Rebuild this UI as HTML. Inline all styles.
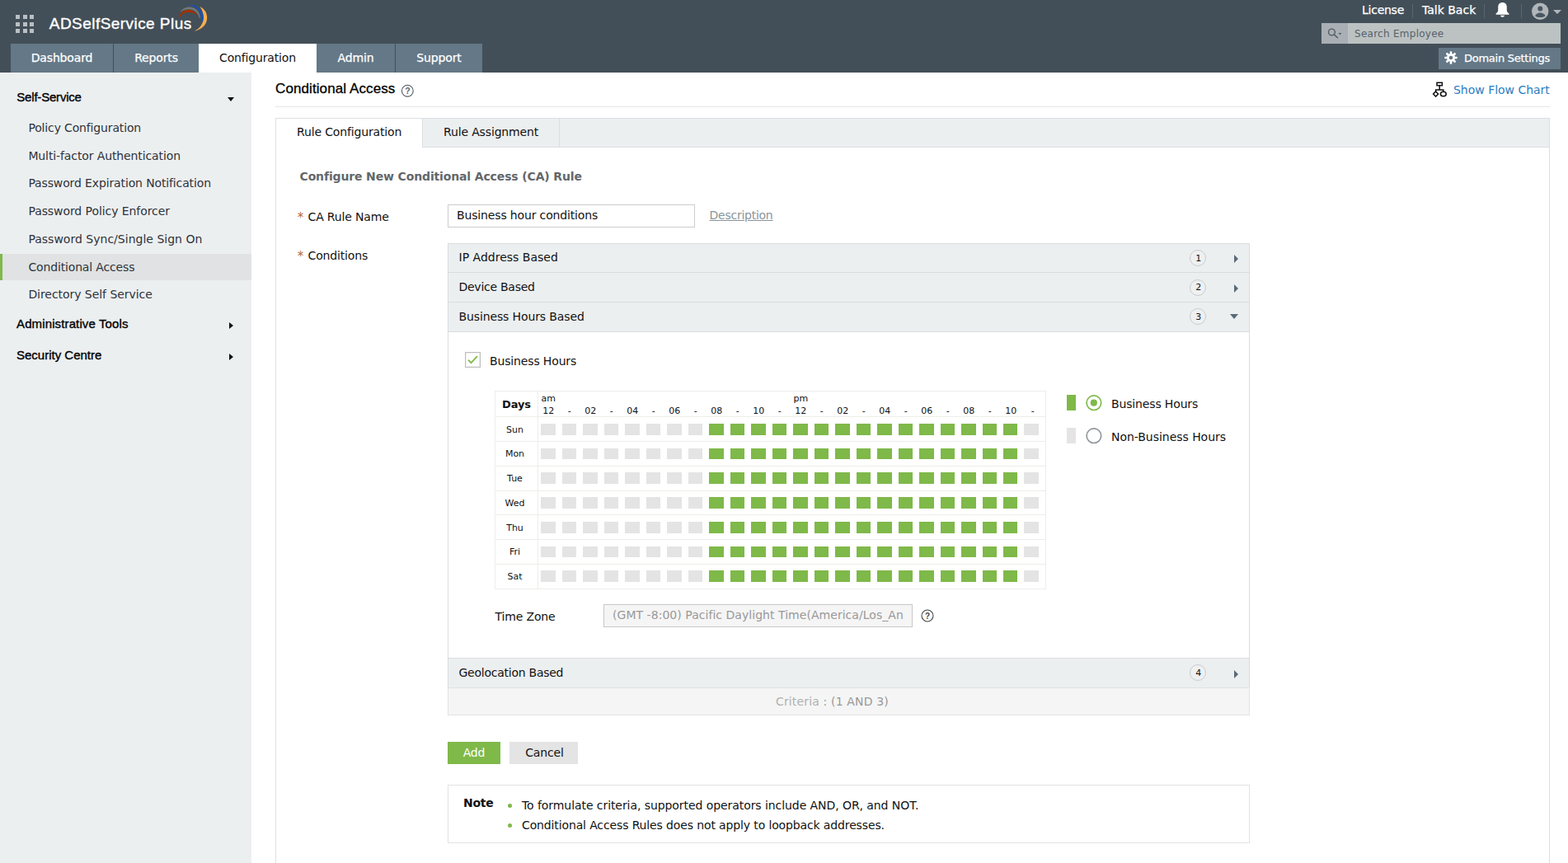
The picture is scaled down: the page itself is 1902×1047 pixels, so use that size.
<!DOCTYPE html>
<html lang="en">
<head>
<meta charset="utf-8">
<title>ADSelfService Plus - Conditional Access</title>
<style>
*{box-sizing:border-box;margin:0;padding:0}
html,body{width:1902px;height:1047px;overflow:hidden;background:#fff}
body{position:relative;font-family:"DejaVu Sans","Liberation Sans",sans-serif;font-size:14px;color:#111;letter-spacing:-0.15px}
.a{position:absolute;white-space:nowrap}
.t{position:absolute;white-space:nowrap;height:20px;line-height:20px}
.lato{font-family:"Liberation Sans",sans-serif;letter-spacing:0}
#hdr{left:0;top:0;width:1902px;height:88px;background:#434f58}
.tab{top:53px;height:35px;line-height:35px;text-align:center;color:#fff;background:#647887;-webkit-text-stroke:0.25px #fff}
.tab.on{background:#fff;color:#111;-webkit-text-stroke:0}
#side{left:0;top:88px;width:305px;height:959px;background:#eceff0}
.sh{left:20px;font-family:"Liberation Sans",sans-serif;font-size:15px;letter-spacing:0;color:#000;-webkit-text-stroke:0.35px #000}
.si{left:34.4px;color:#2e323a}
.tri-r{position:absolute;width:0;height:0;border-left:5.5px solid #596a77;border-top:5px solid transparent;border-bottom:5px solid transparent}
.tri-d{position:absolute;width:0;height:0;border-top:6px solid #596a77;border-left:5px solid transparent;border-right:5px solid transparent}
.req{color:#b06a3a}
.hl{font-size:11px;letter-spacing:0;height:14px;line-height:14px;position:absolute;text-align:center;white-space:nowrap}
</style>
</head>
<body>

<div id="hdr" class="a">
<div class="a" style="left:19.0px;top:18.0px;width:5px;height:5px;background:#b9bfc3"></div>
<div class="a" style="left:27.5px;top:18.0px;width:5px;height:5px;background:#b9bfc3"></div>
<div class="a" style="left:36.0px;top:18.0px;width:5px;height:5px;background:#b9bfc3"></div>
<div class="a" style="left:19.0px;top:26.5px;width:5px;height:5px;background:#b9bfc3"></div>
<div class="a" style="left:27.5px;top:26.5px;width:5px;height:5px;background:#b9bfc3"></div>
<div class="a" style="left:36.0px;top:26.5px;width:5px;height:5px;background:#b9bfc3"></div>
<div class="a" style="left:19.0px;top:35.0px;width:5px;height:5px;background:#b9bfc3"></div>
<div class="a" style="left:27.5px;top:35.0px;width:5px;height:5px;background:#b9bfc3"></div>
<div class="a" style="left:36.0px;top:35.0px;width:5px;height:5px;background:#b9bfc3"></div>
<div class="a lato" style="left:59.800px;top:15.600px;height:26px;line-height:26px;font-size:19px;color:#fff;letter-spacing:0.450px;-webkit-text-stroke:0.350px #fff">ADSelfService Plus</div>
<svg class="a" style="left:210px;top:0px" width="50" height="44" viewBox="210 0 50 44">
<path d="M242.400 8 C248.500 11 251.200 16 251.200 21.500 C251.200 29.500 245 36 235.600 37.800 L238.300 36.300 C243.500 33 246.900 27.500 246.900 21 C246.900 16.500 245.500 12.500 242.400 8 Z" fill="#fbae4e"/>
<path d="M229 5.9 L235 5.9 C241 8 246.5 14 246.8 21 C246.8 24 246 26.5 245 27.8 L243.8 27.5 C244.5 22 243.5 16 240 11.5 C237.5 8.5 234 7 229 6.8 Z" fill="#1a52b5"/>
<path d="M218.8 13.8 C222 10 226 8.6 230 8.6 C237 8.8 242.5 14 243 21.8 L241.8 21.8 C240.5 16 236 11.5 229.5 11.3 C225.5 11.3 222 12 219.2 14.2 Z" fill="#73787b"/>
<path d="M216.8 22 C218 15 224 11.8 229 11.8 C233.5 11.8 237.5 15 239.8 18.8 C236.5 16 233 15 229 15 C223.5 15 219.5 17.5 217.6 22.3 Z" fill="#a33200"/>
</svg>
<div class="a tab" style="left:13px;width:124px">Dashboard</div>
<div class="a tab" style="left:138px;width:103px">Reports</div>
<div class="a tab on" style="left:241px;width:143px">Configuration</div>
<div class="a tab" style="left:384px;width:95px">Admin</div>
<div class="a tab" style="left:480px;width:105px">Support</div>
<div class="t" style="left:1652px;top:2px;color:#fff;letter-spacing:-0.25px;-webkit-text-stroke:0.25px #fff">License</div>
<div class="t" style="left:1725px;top:2px;color:#fff;letter-spacing:0px;-webkit-text-stroke:0.25px #fff">Talk Back</div>
<div class="a" style="left:1713px;top:5px;width:1px;height:17px;background:#5a666f"></div>
<div class="a" style="left:1800px;top:5px;width:1px;height:17px;background:#5a666f"></div>
<div class="a" style="left:1845px;top:5px;width:1px;height:17px;background:#5a666f"></div>
<svg class="a" style="left:1814.400px;top:2px" width="17" height="19" viewBox="0 0 18 21" preserveAspectRatio="none"><path d="M9 1.2c-3.4 0-5.6 2.4-5.6 5.8v4.6c0 1.6-1.2 3.2-2.8 4.4v1.4h16.8v-1.4c-1.6-1.200-2.8-2.800-2.8-4.400V7c0-3.400-2.200-5.800-5.600-5.800z" fill="#fff"/><path d="M6.400 18.600h5.200c0 1.300-1.100 2.100-2.600 2.100s-2.600-0.800-2.600-2.100z" fill="#fff"/></svg>
<svg class="a" style="left:1857px;top:3px" width="22" height="22" viewBox="0 0 22 22"><circle cx="11.200" cy="10.800" r="10.200" fill="#b0b6ba"/><circle cx="11.300" cy="7.400" r="3" fill="#4a5660"/><path d="M5 16.200c1.400-2.600 3.600-3.800 6.300-3.800s4.900 1.200 6.300 3.800c-1.600 1.200-3.800 1.900-6.300 1.900s-4.700-0.700-6.300-1.900z" fill="#4a5660"/></svg>
<div class="a" style="left:1884px;top:12px;width:0;height:0;border-top:5.500px solid #b0b6ba;border-left:5px solid transparent;border-right:5px solid transparent"></div>
<div class="a" style="left:1603px;top:28px;width:290px;height:25px;background:#bcc2c2"></div>
<div class="a" style="left:1603px;top:28px;width:32px;height:25px;background:#a9afb5"></div>
<svg class="a" style="left:1608px;top:31px" width="22" height="18" viewBox="1608 31 22 18"><circle cx="1615.400" cy="39" r="3.900" fill="none" stroke="#4f5b63" stroke-width="1.400"/><path d="M1618.300 42l4.200 3.800" stroke="#4f5b63" stroke-width="1.500" stroke-linecap="round"/><path d="M1623.400 40h4l-2 2.200z" fill="#4f5b63"/></svg>
<div class="t" style="left:1643px;top:31px;font-size:12px;color:#56616a;letter-spacing:0.270px">Search Employee</div>
<div class="a" style="left:1745px;top:58px;width:148px;height:26px;background:#647887"></div>
<svg class="a" style="left:1752px;top:61.800px" width="16" height="16" viewBox="0 0 16 16"><g fill="#fff"><circle cx="8" cy="8" r="5"/><rect x="6.7" y="0.3" width="2.6" height="15.4" rx="0.6"/><rect x="6.7" y="0.3" width="2.6" height="15.4" rx="0.6" transform="rotate(45 8 8)"/><rect x="6.7" y="0.3" width="2.6" height="15.4" rx="0.6" transform="rotate(90 8 8)"/><rect x="6.7" y="0.3" width="2.6" height="15.4" rx="0.6" transform="rotate(135 8 8)"/></g><circle cx="8" cy="8" r="2.3" fill="#647887"/></svg>
<div class="t" style="left:1776px;top:61px;font-size:13px;color:#fff;letter-spacing:-0.26px;-webkit-text-stroke:0.25px #fff">Domain Settings</div>
</div>
<div id="side" class="a"></div>
<div class="a" style="left:0;top:308px;width:305px;height:32px;background:#e0e2e3"></div>
<div class="a" style="left:0;top:308px;width:3px;height:32px;background:#7fb949"></div>
<div class="t sh" style="top:108px;letter-spacing:-0.2px;left:20.3px">Self-Service</div>
<div class="a" style="left:276px;top:118px;width:0;height:0;border-top:5px solid #111;border-left:4.5px solid transparent;border-right:4.5px solid transparent"></div>
<div class="t si" style="top:145px;letter-spacing:-0.15px">Policy Configuration</div>
<div class="t si" style="top:179px;letter-spacing:-0.11px">Multi-factor Authentication</div>
<div class="t si" style="top:212px;letter-spacing:-0.13px">Password Expiration Notification</div>
<div class="t si" style="top:246px;letter-spacing:-0.075px">Password Policy Enforcer</div>
<div class="t si" style="top:280px;letter-spacing:0.01px">Password Sync/Single Sign On</div>
<div class="t si" style="top:314px;letter-spacing:-0.15px">Conditional Access</div>
<div class="t si" style="top:347px;letter-spacing:-0.05px">Directory Self Service</div>
<div class="t sh" style="top:383px;letter-spacing:0.125px">Administrative Tools</div>
<div class="a" style="left:278.400px;top:390.500px;width:0;height:0;border-left:5.500px solid #111;border-top:4.500px solid transparent;border-bottom:4.500px solid transparent"></div>
<div class="t sh" style="top:421px">Security Centre</div>
<div class="a" style="left:278.400px;top:428.500px;width:0;height:0;border-left:5.500px solid #111;border-top:4.500px solid transparent;border-bottom:4.500px solid transparent"></div>
<div class="t lato" style="left:334px;top:96.100px;height:24px;line-height:24px;font-size:17px;color:#000;letter-spacing:0.100px;-webkit-text-stroke:0.300px #000">Conditional Access</div>
<svg class="a" style="left:486px;top:101.500px" width="17" height="17" viewBox="0 0 17 17"><circle cx="8.300" cy="8.200" r="6.900" fill="none" stroke="#4e5a62" stroke-width="1.100"/><text x="8.300" y="12" font-family="Liberation Sans, sans-serif" font-size="10.500" font-weight="bold" text-anchor="middle" fill="#5a656d">?</text></svg>
<svg class="a" style="left:1737px;top:99px" width="19" height="19" viewBox="1737 99 19 19"><g fill="none" stroke="#111" stroke-width="1.500"><rect x="1743" y="100.300" width="6.400" height="3.400"/><path d="M1746.200 103.700V109M1741.600 111V109H1750.800V111"/><path d="M1741.600 110.900L1744.600 114L1741.600 117.100L1738.600 114Z"/><ellipse cx="1750.800" cy="114" rx="3.400" ry="2.800"/></g></svg>
<div class="t" style="left:1763px;top:99px;color:#2b7dc4;letter-spacing:-0.02px">Show Flow Chart</div>
<div class="a" style="left:334px;top:129px;width:1546px;height:1px;background:#e4e6e7"></div>
<div class="a" style="left:334px;top:143px;width:1546px;height:920px;border:1px solid #dcdfe1;background:#fff"></div>
<div class="a" style="left:334px;top:143px;width:1546px;height:36px;border:1px solid #dcdfe1;background:#eceff0"></div>
<div class="a" style="left:335px;top:144px;width:177px;height:36px;background:#fff"></div>
<div class="a" style="left:512px;top:144px;width:1px;height:34px;background:#dcdfe1"></div>
<div class="a" style="left:678px;top:144px;width:1px;height:34px;background:#dcdfe1"></div>
<div class="t" style="left:360px;top:150px">Rule Configuration</div>
<div class="t" style="left:538px;top:150px">Rule Assignment</div>
<div class="t" style="left:363.5px;top:204px;font-weight:bold;color:#63676a;letter-spacing:-0.14px">Configure New Conditional Access (CA) Rule</div>
<div class="t req" style="left:360.800px;top:254px;font-size:15px;letter-spacing:0">*</div>
<div class="t" style="left:373.5px;top:253px">CA Rule Name</div>
<div class="a" style="left:543px;top:248px;width:300px;height:28px;border:1px solid #ccc;background:#fff"></div>
<div class="t" style="left:554px;top:251px">Business hour conditions</div>
<div class="t" style="left:860.5px;top:251px;color:#8a9499;text-decoration:underline;letter-spacing:-0.25px">Description</div>
<div class="t req" style="left:360.800px;top:301px;font-size:15px;letter-spacing:0">*</div>
<div class="t" style="left:373.5px;top:300px">Conditions</div>
<div class="a" style="left:543px;top:295px;width:973px;height:573px;background:#fff;border:1px solid #d9dddf"></div>
<div class="a" style="left:543px;top:295px;width:973px;height:36px;background:#eceff0;border:1px solid #d9dddf"></div>
<div class="t" style="left:556.5px;top:302px;letter-spacing:0.01px">IP Address Based</div>
<div class="a" style="left:1443px;top:303px;width:20px;height:20px;border-radius:50%;border:1px solid #c9cccd;background:#eef0f1;font-size:11px;line-height:19.6px;text-indent:1.4px;text-align:center;letter-spacing:0">1</div>
<div class="tri-r" style="left:1497px;top:308.5px"></div>
<div class="a" style="left:543px;top:330px;width:973px;height:37px;background:#eceff0;border:1px solid #d9dddf"></div>
<div class="t" style="left:556.5px;top:338px;letter-spacing:-0.26px">Device Based</div>
<div class="a" style="left:1443px;top:338.5px;width:20px;height:20px;border-radius:50%;border:1px solid #c9cccd;background:#eef0f1;font-size:11px;line-height:18px;text-indent:1.4px;text-align:center;letter-spacing:0">2</div>
<div class="tri-r" style="left:1497px;top:345.0px"></div>
<div class="a" style="left:543px;top:366px;width:973px;height:37px;background:#eceff0;border:1px solid #d9dddf"></div>
<div class="t" style="left:556.5px;top:374px;letter-spacing:-0.12px">Business Hours Based</div>
<div class="a" style="left:1443px;top:374px;width:20px;height:20px;border-radius:50%;border:1px solid #c9cccd;background:#eef0f1;font-size:11px;line-height:19.6px;text-indent:1.4px;text-align:center;letter-spacing:0">3</div>
<div class="tri-d" style="left:1492px;top:380.5px"></div>
<div class="a" style="left:543px;top:798px;width:973px;height:37px;background:#eceff0;border:1px solid #d9dddf"></div>
<div class="t" style="left:556.5px;top:806px;letter-spacing:-0.25px">Geolocation Based</div>
<div class="a" style="left:1443px;top:806px;width:20px;height:20px;border-radius:50%;border:1px solid #c9cccd;background:#eef0f1;font-size:11px;line-height:19.6px;text-indent:1.4px;text-align:center;letter-spacing:0">4</div>
<div class="tri-r" style="left:1497px;top:813.0px"></div>
<div class="a" style="left:543px;top:834px;width:973px;height:34px;border:1px solid #e2e3e3;border-top-color:#dfe2e3;background:#f5f5f5"></div>
<div class="t" style="left:941px;top:841px;color:#999;letter-spacing:0.15px"><span style="color:#b0b0b0">Criteria</span> : (1 AND 3)</div>
<div class="a" style="left:564px;top:427px;width:19px;height:19px;border:1px solid #bdbdbd;background:#fff;box-shadow:inset 0 0 0 1px #f0f0f0"></div>
<svg class="a" style="left:564px;top:427px" width="19" height="19" viewBox="0 0 19 19"><path d="M4 9.6l3.4 3.6 7.6-8" fill="none" stroke="#7fb949" stroke-width="1.800"/></svg>
<div class="t" style="left:594px;top:428px">Business Hours</div>
<div class="a" style="left:600px;top:474px;width:669px;height:241px;border:1px solid #ededea;background:#fff"></div>
<div class="a" style="left:652px;top:474px;width:1px;height:241px;background:#ededea"></div>
<div class="a" style="left:600px;top:505px;width:669px;height:1px;background:#ededea"></div>
<div class="a" style="left:600px;top:535px;width:669px;height:1px;background:#ededea"></div>
<div class="a" style="left:600px;top:565px;width:669px;height:1px;background:#ededea"></div>
<div class="a" style="left:600px;top:595px;width:669px;height:1px;background:#ededea"></div>
<div class="a" style="left:600px;top:624px;width:669px;height:1px;background:#ededea"></div>
<div class="a" style="left:600px;top:654px;width:669px;height:1px;background:#ededea"></div>
<div class="a" style="left:600px;top:684px;width:669px;height:1px;background:#ededea"></div>
<div class="t" style="left:609px;top:481.4px;font-size:13px;font-weight:bold;letter-spacing:-0.1px">Days</div>
<div class="hl" style="left:653.25px;width:24px;top:492px">12</div>
<div class="hl" style="left:678.75px;width:24px;top:492px">-</div>
<div class="hl" style="left:704.25px;width:24px;top:492px">02</div>
<div class="hl" style="left:729.75px;width:24px;top:492px">-</div>
<div class="hl" style="left:755.25px;width:24px;top:492px">04</div>
<div class="hl" style="left:780.75px;width:24px;top:492px">-</div>
<div class="hl" style="left:806.25px;width:24px;top:492px">06</div>
<div class="hl" style="left:831.75px;width:24px;top:492px">-</div>
<div class="hl" style="left:857.25px;width:24px;top:492px">08</div>
<div class="hl" style="left:882.75px;width:24px;top:492px">-</div>
<div class="hl" style="left:908.25px;width:24px;top:492px">10</div>
<div class="hl" style="left:933.75px;width:24px;top:492px">-</div>
<div class="hl" style="left:959.25px;width:24px;top:492px">12</div>
<div class="hl" style="left:984.75px;width:24px;top:492px">-</div>
<div class="hl" style="left:1010.25px;width:24px;top:492px">02</div>
<div class="hl" style="left:1035.75px;width:24px;top:492px">-</div>
<div class="hl" style="left:1061.25px;width:24px;top:492px">04</div>
<div class="hl" style="left:1086.75px;width:24px;top:492px">-</div>
<div class="hl" style="left:1112.25px;width:24px;top:492px">06</div>
<div class="hl" style="left:1137.75px;width:24px;top:492px">-</div>
<div class="hl" style="left:1163.25px;width:24px;top:492px">08</div>
<div class="hl" style="left:1188.75px;width:24px;top:492px">-</div>
<div class="hl" style="left:1214.25px;width:24px;top:492px">10</div>
<div class="hl" style="left:1240.75px;width:24px;top:492px">-</div>
<div class="hl" style="left:656.5px;top:477px;text-align:left">am</div>
<div class="hl" style="left:962.5px;top:477px;text-align:left">pm</div>
<div class="hl" style="left:601px;width:47px;top:515px">Sun</div>
<div class="a" style="left:656px;top:514px;width:18px;height:14px;background:#e4e4e4"></div>
<div class="a" style="left:682px;top:514px;width:17px;height:14px;background:#e4e4e4"></div>
<div class="a" style="left:707px;top:514px;width:18px;height:14px;background:#e4e4e4"></div>
<div class="a" style="left:733px;top:514px;width:17px;height:14px;background:#e4e4e4"></div>
<div class="a" style="left:758px;top:514px;width:18px;height:14px;background:#e4e4e4"></div>
<div class="a" style="left:784px;top:514px;width:17px;height:14px;background:#e4e4e4"></div>
<div class="a" style="left:809px;top:514px;width:18px;height:14px;background:#e4e4e4"></div>
<div class="a" style="left:835px;top:514px;width:17px;height:14px;background:#e4e4e4"></div>
<div class="a" style="left:860px;top:514px;width:18px;height:14px;background:#7fb949"></div>
<div class="a" style="left:886px;top:514px;width:17px;height:14px;background:#7fb949"></div>
<div class="a" style="left:911px;top:514px;width:18px;height:14px;background:#7fb949"></div>
<div class="a" style="left:937px;top:514px;width:17px;height:14px;background:#7fb949"></div>
<div class="a" style="left:962px;top:514px;width:18px;height:14px;background:#7fb949"></div>
<div class="a" style="left:988px;top:514px;width:17px;height:14px;background:#7fb949"></div>
<div class="a" style="left:1013px;top:514px;width:18px;height:14px;background:#7fb949"></div>
<div class="a" style="left:1039px;top:514px;width:17px;height:14px;background:#7fb949"></div>
<div class="a" style="left:1064px;top:514px;width:18px;height:14px;background:#7fb949"></div>
<div class="a" style="left:1090px;top:514px;width:17px;height:14px;background:#7fb949"></div>
<div class="a" style="left:1115px;top:514px;width:18px;height:14px;background:#7fb949"></div>
<div class="a" style="left:1141px;top:514px;width:17px;height:14px;background:#7fb949"></div>
<div class="a" style="left:1166px;top:514px;width:18px;height:14px;background:#7fb949"></div>
<div class="a" style="left:1192px;top:514px;width:17px;height:14px;background:#7fb949"></div>
<div class="a" style="left:1217px;top:514px;width:17px;height:14px;background:#7fb949"></div>
<div class="a" style="left:1242px;top:514px;width:18px;height:14px;background:#e4e4e4"></div>
<div class="hl" style="left:601px;width:47px;top:544px">Mon</div>
<div class="a" style="left:656px;top:544px;width:18px;height:13px;background:#e4e4e4"></div>
<div class="a" style="left:682px;top:544px;width:17px;height:13px;background:#e4e4e4"></div>
<div class="a" style="left:707px;top:544px;width:18px;height:13px;background:#e4e4e4"></div>
<div class="a" style="left:733px;top:544px;width:17px;height:13px;background:#e4e4e4"></div>
<div class="a" style="left:758px;top:544px;width:18px;height:13px;background:#e4e4e4"></div>
<div class="a" style="left:784px;top:544px;width:17px;height:13px;background:#e4e4e4"></div>
<div class="a" style="left:809px;top:544px;width:18px;height:13px;background:#e4e4e4"></div>
<div class="a" style="left:835px;top:544px;width:17px;height:13px;background:#e4e4e4"></div>
<div class="a" style="left:860px;top:544px;width:18px;height:13px;background:#7fb949"></div>
<div class="a" style="left:886px;top:544px;width:17px;height:13px;background:#7fb949"></div>
<div class="a" style="left:911px;top:544px;width:18px;height:13px;background:#7fb949"></div>
<div class="a" style="left:937px;top:544px;width:17px;height:13px;background:#7fb949"></div>
<div class="a" style="left:962px;top:544px;width:18px;height:13px;background:#7fb949"></div>
<div class="a" style="left:988px;top:544px;width:17px;height:13px;background:#7fb949"></div>
<div class="a" style="left:1013px;top:544px;width:18px;height:13px;background:#7fb949"></div>
<div class="a" style="left:1039px;top:544px;width:17px;height:13px;background:#7fb949"></div>
<div class="a" style="left:1064px;top:544px;width:18px;height:13px;background:#7fb949"></div>
<div class="a" style="left:1090px;top:544px;width:17px;height:13px;background:#7fb949"></div>
<div class="a" style="left:1115px;top:544px;width:18px;height:13px;background:#7fb949"></div>
<div class="a" style="left:1141px;top:544px;width:17px;height:13px;background:#7fb949"></div>
<div class="a" style="left:1166px;top:544px;width:18px;height:13px;background:#7fb949"></div>
<div class="a" style="left:1192px;top:544px;width:17px;height:13px;background:#7fb949"></div>
<div class="a" style="left:1217px;top:544px;width:17px;height:13px;background:#7fb949"></div>
<div class="a" style="left:1242px;top:544px;width:18px;height:13px;background:#e4e4e4"></div>
<div class="hl" style="left:601px;width:47px;top:574px">Tue</div>
<div class="a" style="left:656px;top:573px;width:18px;height:14px;background:#e4e4e4"></div>
<div class="a" style="left:682px;top:573px;width:17px;height:14px;background:#e4e4e4"></div>
<div class="a" style="left:707px;top:573px;width:18px;height:14px;background:#e4e4e4"></div>
<div class="a" style="left:733px;top:573px;width:17px;height:14px;background:#e4e4e4"></div>
<div class="a" style="left:758px;top:573px;width:18px;height:14px;background:#e4e4e4"></div>
<div class="a" style="left:784px;top:573px;width:17px;height:14px;background:#e4e4e4"></div>
<div class="a" style="left:809px;top:573px;width:18px;height:14px;background:#e4e4e4"></div>
<div class="a" style="left:835px;top:573px;width:17px;height:14px;background:#e4e4e4"></div>
<div class="a" style="left:860px;top:573px;width:18px;height:14px;background:#7fb949"></div>
<div class="a" style="left:886px;top:573px;width:17px;height:14px;background:#7fb949"></div>
<div class="a" style="left:911px;top:573px;width:18px;height:14px;background:#7fb949"></div>
<div class="a" style="left:937px;top:573px;width:17px;height:14px;background:#7fb949"></div>
<div class="a" style="left:962px;top:573px;width:18px;height:14px;background:#7fb949"></div>
<div class="a" style="left:988px;top:573px;width:17px;height:14px;background:#7fb949"></div>
<div class="a" style="left:1013px;top:573px;width:18px;height:14px;background:#7fb949"></div>
<div class="a" style="left:1039px;top:573px;width:17px;height:14px;background:#7fb949"></div>
<div class="a" style="left:1064px;top:573px;width:18px;height:14px;background:#7fb949"></div>
<div class="a" style="left:1090px;top:573px;width:17px;height:14px;background:#7fb949"></div>
<div class="a" style="left:1115px;top:573px;width:18px;height:14px;background:#7fb949"></div>
<div class="a" style="left:1141px;top:573px;width:17px;height:14px;background:#7fb949"></div>
<div class="a" style="left:1166px;top:573px;width:18px;height:14px;background:#7fb949"></div>
<div class="a" style="left:1192px;top:573px;width:17px;height:14px;background:#7fb949"></div>
<div class="a" style="left:1217px;top:573px;width:17px;height:14px;background:#7fb949"></div>
<div class="a" style="left:1242px;top:573px;width:18px;height:14px;background:#e4e4e4"></div>
<div class="hl" style="left:601px;width:47px;top:604px">Wed</div>
<div class="a" style="left:656px;top:603px;width:18px;height:14px;background:#e4e4e4"></div>
<div class="a" style="left:682px;top:603px;width:17px;height:14px;background:#e4e4e4"></div>
<div class="a" style="left:707px;top:603px;width:18px;height:14px;background:#e4e4e4"></div>
<div class="a" style="left:733px;top:603px;width:17px;height:14px;background:#e4e4e4"></div>
<div class="a" style="left:758px;top:603px;width:18px;height:14px;background:#e4e4e4"></div>
<div class="a" style="left:784px;top:603px;width:17px;height:14px;background:#e4e4e4"></div>
<div class="a" style="left:809px;top:603px;width:18px;height:14px;background:#e4e4e4"></div>
<div class="a" style="left:835px;top:603px;width:17px;height:14px;background:#e4e4e4"></div>
<div class="a" style="left:860px;top:603px;width:18px;height:14px;background:#7fb949"></div>
<div class="a" style="left:886px;top:603px;width:17px;height:14px;background:#7fb949"></div>
<div class="a" style="left:911px;top:603px;width:18px;height:14px;background:#7fb949"></div>
<div class="a" style="left:937px;top:603px;width:17px;height:14px;background:#7fb949"></div>
<div class="a" style="left:962px;top:603px;width:18px;height:14px;background:#7fb949"></div>
<div class="a" style="left:988px;top:603px;width:17px;height:14px;background:#7fb949"></div>
<div class="a" style="left:1013px;top:603px;width:18px;height:14px;background:#7fb949"></div>
<div class="a" style="left:1039px;top:603px;width:17px;height:14px;background:#7fb949"></div>
<div class="a" style="left:1064px;top:603px;width:18px;height:14px;background:#7fb949"></div>
<div class="a" style="left:1090px;top:603px;width:17px;height:14px;background:#7fb949"></div>
<div class="a" style="left:1115px;top:603px;width:18px;height:14px;background:#7fb949"></div>
<div class="a" style="left:1141px;top:603px;width:17px;height:14px;background:#7fb949"></div>
<div class="a" style="left:1166px;top:603px;width:18px;height:14px;background:#7fb949"></div>
<div class="a" style="left:1192px;top:603px;width:17px;height:14px;background:#7fb949"></div>
<div class="a" style="left:1217px;top:603px;width:17px;height:14px;background:#7fb949"></div>
<div class="a" style="left:1242px;top:603px;width:18px;height:14px;background:#e4e4e4"></div>
<div class="hl" style="left:601px;width:47px;top:634px">Thu</div>
<div class="a" style="left:656px;top:633px;width:18px;height:14px;background:#e4e4e4"></div>
<div class="a" style="left:682px;top:633px;width:17px;height:14px;background:#e4e4e4"></div>
<div class="a" style="left:707px;top:633px;width:18px;height:14px;background:#e4e4e4"></div>
<div class="a" style="left:733px;top:633px;width:17px;height:14px;background:#e4e4e4"></div>
<div class="a" style="left:758px;top:633px;width:18px;height:14px;background:#e4e4e4"></div>
<div class="a" style="left:784px;top:633px;width:17px;height:14px;background:#e4e4e4"></div>
<div class="a" style="left:809px;top:633px;width:18px;height:14px;background:#e4e4e4"></div>
<div class="a" style="left:835px;top:633px;width:17px;height:14px;background:#e4e4e4"></div>
<div class="a" style="left:860px;top:633px;width:18px;height:14px;background:#7fb949"></div>
<div class="a" style="left:886px;top:633px;width:17px;height:14px;background:#7fb949"></div>
<div class="a" style="left:911px;top:633px;width:18px;height:14px;background:#7fb949"></div>
<div class="a" style="left:937px;top:633px;width:17px;height:14px;background:#7fb949"></div>
<div class="a" style="left:962px;top:633px;width:18px;height:14px;background:#7fb949"></div>
<div class="a" style="left:988px;top:633px;width:17px;height:14px;background:#7fb949"></div>
<div class="a" style="left:1013px;top:633px;width:18px;height:14px;background:#7fb949"></div>
<div class="a" style="left:1039px;top:633px;width:17px;height:14px;background:#7fb949"></div>
<div class="a" style="left:1064px;top:633px;width:18px;height:14px;background:#7fb949"></div>
<div class="a" style="left:1090px;top:633px;width:17px;height:14px;background:#7fb949"></div>
<div class="a" style="left:1115px;top:633px;width:18px;height:14px;background:#7fb949"></div>
<div class="a" style="left:1141px;top:633px;width:17px;height:14px;background:#7fb949"></div>
<div class="a" style="left:1166px;top:633px;width:18px;height:14px;background:#7fb949"></div>
<div class="a" style="left:1192px;top:633px;width:17px;height:14px;background:#7fb949"></div>
<div class="a" style="left:1217px;top:633px;width:17px;height:14px;background:#7fb949"></div>
<div class="a" style="left:1242px;top:633px;width:18px;height:14px;background:#e4e4e4"></div>
<div class="hl" style="left:601px;width:47px;top:663px">Fri</div>
<div class="a" style="left:656px;top:663px;width:18px;height:13px;background:#e4e4e4"></div>
<div class="a" style="left:682px;top:663px;width:17px;height:13px;background:#e4e4e4"></div>
<div class="a" style="left:707px;top:663px;width:18px;height:13px;background:#e4e4e4"></div>
<div class="a" style="left:733px;top:663px;width:17px;height:13px;background:#e4e4e4"></div>
<div class="a" style="left:758px;top:663px;width:18px;height:13px;background:#e4e4e4"></div>
<div class="a" style="left:784px;top:663px;width:17px;height:13px;background:#e4e4e4"></div>
<div class="a" style="left:809px;top:663px;width:18px;height:13px;background:#e4e4e4"></div>
<div class="a" style="left:835px;top:663px;width:17px;height:13px;background:#e4e4e4"></div>
<div class="a" style="left:860px;top:663px;width:18px;height:13px;background:#7fb949"></div>
<div class="a" style="left:886px;top:663px;width:17px;height:13px;background:#7fb949"></div>
<div class="a" style="left:911px;top:663px;width:18px;height:13px;background:#7fb949"></div>
<div class="a" style="left:937px;top:663px;width:17px;height:13px;background:#7fb949"></div>
<div class="a" style="left:962px;top:663px;width:18px;height:13px;background:#7fb949"></div>
<div class="a" style="left:988px;top:663px;width:17px;height:13px;background:#7fb949"></div>
<div class="a" style="left:1013px;top:663px;width:18px;height:13px;background:#7fb949"></div>
<div class="a" style="left:1039px;top:663px;width:17px;height:13px;background:#7fb949"></div>
<div class="a" style="left:1064px;top:663px;width:18px;height:13px;background:#7fb949"></div>
<div class="a" style="left:1090px;top:663px;width:17px;height:13px;background:#7fb949"></div>
<div class="a" style="left:1115px;top:663px;width:18px;height:13px;background:#7fb949"></div>
<div class="a" style="left:1141px;top:663px;width:17px;height:13px;background:#7fb949"></div>
<div class="a" style="left:1166px;top:663px;width:18px;height:13px;background:#7fb949"></div>
<div class="a" style="left:1192px;top:663px;width:17px;height:13px;background:#7fb949"></div>
<div class="a" style="left:1217px;top:663px;width:17px;height:13px;background:#7fb949"></div>
<div class="a" style="left:1242px;top:663px;width:18px;height:13px;background:#e4e4e4"></div>
<div class="hl" style="left:601px;width:47px;top:693px">Sat</div>
<div class="a" style="left:656px;top:692px;width:18px;height:14px;background:#e4e4e4"></div>
<div class="a" style="left:682px;top:692px;width:17px;height:14px;background:#e4e4e4"></div>
<div class="a" style="left:707px;top:692px;width:18px;height:14px;background:#e4e4e4"></div>
<div class="a" style="left:733px;top:692px;width:17px;height:14px;background:#e4e4e4"></div>
<div class="a" style="left:758px;top:692px;width:18px;height:14px;background:#e4e4e4"></div>
<div class="a" style="left:784px;top:692px;width:17px;height:14px;background:#e4e4e4"></div>
<div class="a" style="left:809px;top:692px;width:18px;height:14px;background:#e4e4e4"></div>
<div class="a" style="left:835px;top:692px;width:17px;height:14px;background:#e4e4e4"></div>
<div class="a" style="left:860px;top:692px;width:18px;height:14px;background:#7fb949"></div>
<div class="a" style="left:886px;top:692px;width:17px;height:14px;background:#7fb949"></div>
<div class="a" style="left:911px;top:692px;width:18px;height:14px;background:#7fb949"></div>
<div class="a" style="left:937px;top:692px;width:17px;height:14px;background:#7fb949"></div>
<div class="a" style="left:962px;top:692px;width:18px;height:14px;background:#7fb949"></div>
<div class="a" style="left:988px;top:692px;width:17px;height:14px;background:#7fb949"></div>
<div class="a" style="left:1013px;top:692px;width:18px;height:14px;background:#7fb949"></div>
<div class="a" style="left:1039px;top:692px;width:17px;height:14px;background:#7fb949"></div>
<div class="a" style="left:1064px;top:692px;width:18px;height:14px;background:#7fb949"></div>
<div class="a" style="left:1090px;top:692px;width:17px;height:14px;background:#7fb949"></div>
<div class="a" style="left:1115px;top:692px;width:18px;height:14px;background:#7fb949"></div>
<div class="a" style="left:1141px;top:692px;width:17px;height:14px;background:#7fb949"></div>
<div class="a" style="left:1166px;top:692px;width:18px;height:14px;background:#7fb949"></div>
<div class="a" style="left:1192px;top:692px;width:17px;height:14px;background:#7fb949"></div>
<div class="a" style="left:1217px;top:692px;width:17px;height:14px;background:#7fb949"></div>
<div class="a" style="left:1242px;top:692px;width:18px;height:14px;background:#e4e4e4"></div>
<div class="a" style="left:1294px;top:479px;width:11px;height:19px;background:#7fb949"></div>
<div class="a" style="left:1294px;top:519px;width:11px;height:19px;background:#e4e4e4"></div>
<svg class="a" style="left:1315px;top:476px" width="24" height="66" viewBox="1315 476 24 66"><circle cx="1326.900" cy="488.700" r="8.800" fill="#fff" stroke="#7fb949" stroke-width="1.700"/><circle cx="1326.800" cy="488.700" r="4.100" fill="#7fb949"/><circle cx="1326.900" cy="528.700" r="8.800" fill="#fff" stroke="#90969b" stroke-width="1.700"/></svg>
<div class="t" style="left:1348px;top:480px">Business Hours</div>
<div class="t" style="left:1348px;top:520px;letter-spacing:-0.04px">Non-Business Hours</div>
<div class="t" style="left:600.5px;top:738px">Time Zone</div>
<div class="a" style="left:732px;top:733px;width:375px;height:28px;border:1px solid #c8c8c8;background:#f5f5f5"></div>
<div class="t" style="left:743px;top:736px;color:#999;letter-spacing:0.04px">(GMT -8:00) Pacific Daylight Time(America/Los_An</div>
<svg class="a" style="left:1117px;top:739px" width="16" height="16" viewBox="0 0 16 16"><circle cx="8" cy="8" r="7" fill="none" stroke="#444" stroke-width="1.1"/><text x="8" y="11.6" font-family="Liberation Sans, sans-serif" font-size="10" font-weight="bold" text-anchor="middle" fill="#444">?</text></svg>
<div class="a" style="left:543px;top:900px;width:64px;height:27px;background:#7fb949;color:#fff;text-align:center;line-height:26px">Add</div>
<div class="a" style="left:618px;top:900px;width:83px;height:27px;background:#e4e4e4;color:#111;text-align:center;line-height:26px;padding-left:2px">Cancel</div>
<div class="a" style="left:543px;top:952px;width:973px;height:71px;border:1px solid #e2e2e2;background:#fff"></div>
<div class="t" style="left:562px;top:964px;font-weight:bold;letter-spacing:-0.300px">Note</div>
<div class="a" style="left:616px;top:975px;width:5px;height:5px;border-radius:50%;background:#7fb949"></div>
<div class="a" style="left:616px;top:999px;width:5px;height:5px;border-radius:50%;background:#7fb949"></div>
<div class="t" style="left:633px;top:967px;letter-spacing:-0.07px">To formulate criteria, supported operators include AND, OR, and NOT.</div>
<div class="t" style="left:633px;top:991px;letter-spacing:-0.13px">Conditional Access Rules does not apply to loopback addresses.</div>
</body>
</html>
